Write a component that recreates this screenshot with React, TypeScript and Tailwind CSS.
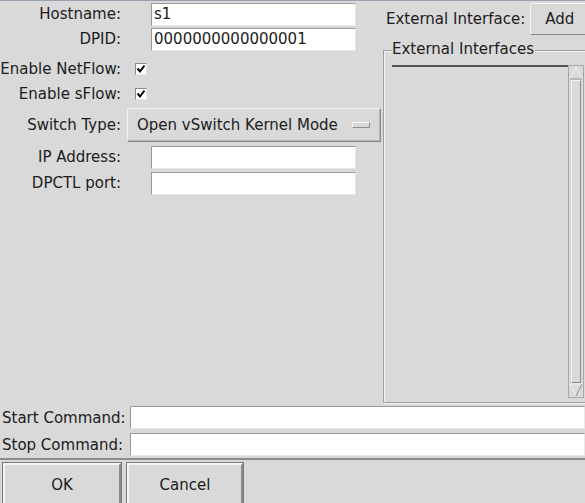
import React from "react";

function Entry({ w, value, cls = "" }: { w: string; value?: string; cls?: string }) {
  return (
    <div
      className={`${w} h-[23px] bg-white border border-t-[#9a9a9a] border-l-[#9a9a9a] border-b-[#e8e8e8] border-r-[#e8e8e8] flex items-center pl-[2px] leading-none ${cls}`}
    >
      {value}
    </div>
  );
}

function Check() {
  return (
    <div className="ml-[8px] w-[12px] h-[12px] bg-white border border-t-[#8a8a8a] border-l-[#8a8a8a] border-b-[#e6e6e6] border-r-[#e6e6e6] flex items-center justify-center">
      <svg width="10" height="10" viewBox="0 0 10 10">
        <path d="M1.5 4.5 L4 7.5 L8.5 1.5" stroke="#000" strokeWidth="2" fill="none" />
      </svg>
    </div>
  );
}

function Label({ children }: { children: React.ReactNode }) {
  return <div className="w-[127px] shrink-0 text-right pr-[6px] whitespace-nowrap">{children}</div>;
}

export default function App() {
  return (
    <div className="w-[585px] h-[503px] overflow-hidden bg-[#d9d9d9] border-t border-t-[#98a2ae] text-[#1c1c1c] font-['DejaVu_Sans',sans-serif] text-[15px] flex flex-col">
      <div className="h-[402px] flex shrink-0">
        {/* left column */}
        <div className="w-[383px] shrink-0 flex flex-col pt-[2px]">
          <div className="flex items-center h-[23px]">
            <Label>Hostname:</Label>
            <Entry w="w-[205px]" value="s1" cls="ml-[24px]" />
          </div>
          <div className="flex items-center h-[23px] mt-[2px]">
            <Label>DPID:</Label>
            <Entry w="w-[205px]" value="0000000000000001" cls="ml-[24px]" />
          </div>
          <div className="flex items-center h-[24px] mt-[6px]">
            <Label>Enable NetFlow:</Label>
            <Check />
          </div>
          <div className="flex items-center h-[24px] mt-[1px]">
            <Label>Enable sFlow:</Label>
            <Check />
          </div>
          <div className="flex items-center h-[34px] mt-[2px]">
            <Label>Switch Type:</Label>
            <div className="w-[254px] h-[34px] border border-t-[#f4f4f4] border-l-[#f4f4f4] border-b-[#8a8a8a] border-r-[#8a8a8a] shadow-[inset_-1px_-1px_0_#b4b4b4] flex items-center pl-[9px] pr-[10px] justify-between">
              <span className="whitespace-nowrap">Open vSwitch Kernel Mode</span>
              <div className="w-[18px] h-[6px] border border-t-[#f4f4f4] border-l-[#f4f4f4] border-b-[#8a8a8a] border-r-[#8a8a8a] bg-[#d9d9d9]" />
            </div>
          </div>
          <div className="flex items-center h-[23px] mt-[4px]">
            <Label>IP Address:</Label>
            <Entry w="w-[205px]" cls="ml-[24px]" />
          </div>
          <div className="flex items-center h-[23px] mt-[3px]">
            <Label>DPCTL port:</Label>
            <Entry w="w-[205px]" cls="ml-[24px]" />
          </div>
        </div>
        {/* right column */}
        <div className="flex-1 flex flex-col">
          <div className="flex items-center h-[32px] mt-[2px]">
            <span className="ml-[3px] whitespace-nowrap">External Interface:</span>
            <div className="ml-[5px] w-[62px] h-[32px] border border-t-[#f4f4f4] border-l-[#f4f4f4] border-b-[#8a8a8a] border-r-[#8a8a8a] flex items-center pl-[14px]">
              Add
            </div>
          </div>
          <div className="relative mt-[15px] h-[353px] w-[212px] border border-[#a0a0a0] shadow-[inset_1px_1px_0_#f4f4f4,1px_1px_0_#f4f4f4]">
            <div className="absolute left-[8px] top-[-11px] bg-[#d9d9d9] pr-[1px] leading-[18px] whitespace-nowrap">
              External Interfaces
            </div>
            <div className="absolute left-[8px] top-[14px] w-[176px] bottom-[4px] border-t-2 border-t-[#555555]" />
            <div className="absolute left-[184px] top-[14px] w-[16px] bottom-[4px] border border-[#a8a8a8] bg-[#d9d9d9] flex flex-col">
              <svg width="14" height="14" viewBox="0 0 14 14" className="shrink-0">
                <path d="M7 1 L13 13 L1 13 Z" fill="#d9d9d9" stroke="#f4f4f4" strokeWidth="1" />
                <path d="M13 13 L1 13" stroke="#8a8a8a" strokeWidth="1" />
              </svg>
              <div className="flex-1 mx-[2px] border border-t-[#f4f4f4] border-l-[#f4f4f4] border-b-[#8a8a8a] border-r-[#8a8a8a]" />
              <svg width="14" height="14" viewBox="0 0 14 14" className="shrink-0">
                <path d="M1 1 L13 1 L7 13 Z" fill="#d9d9d9" stroke="#f4f4f4" strokeWidth="1" />
                <path d="M13 1 L7 13" stroke="#8a8a8a" strokeWidth="1" />
              </svg>
            </div>
          </div>
        </div>
      </div>
      <div className="flex items-center h-[24px] mt-[2px]">
        <div className="w-[130px] shrink-0 pl-[2px] pt-[2px] whitespace-nowrap">Start Command:</div>
        <Entry w="flex-1" />
      </div>
      <div className="flex items-center h-[24px] mt-[3px]">
        <div className="w-[130px] shrink-0 pl-[2px] pt-[2px] whitespace-nowrap">Stop Command:</div>
        <Entry w="flex-1" />
      </div>
      <div className="flex-1 mt-[2px] border-t-2 border-t-[#8c8c8c] flex gap-[4px] pl-[2px] pt-[2px]">
        <div className="w-[120px] h-[46px] border border-[#7a7a7a] shrink-0">
          <div className="w-full h-full border-2 border-t-[#f4f4f4] border-l-[#f4f4f4] border-b-[#8a8a8a] border-r-[#8a8a8a] flex items-center justify-center">
            OK
          </div>
        </div>
        <div className="w-[118px] h-[46px] border border-[#7a7a7a] shrink-0">
          <div className="w-full h-full border-2 border-t-[#f4f4f4] border-l-[#f4f4f4] border-b-[#8a8a8a] border-r-[#8a8a8a] flex items-center justify-center">
            Cancel
          </div>
        </div>
      </div>
    </div>
  );
}
